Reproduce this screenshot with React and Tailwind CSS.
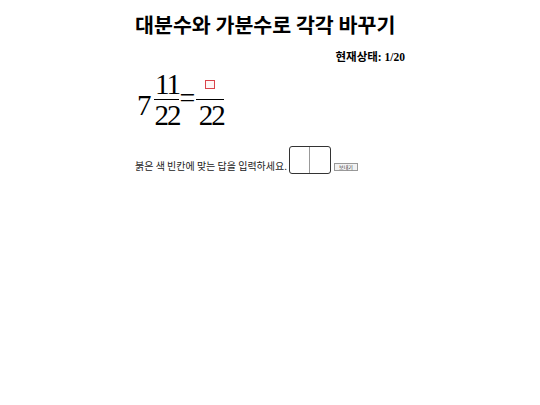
export default function App() {
  return (
    <div className="w-full min-h-[405px] bg-white">
      <div className="w-[270px] mx-auto" style={{ fontFamily: '"Noto Sans CJK KR", "Noto Sans", sans-serif' }}>
        <h1 className="pt-[10px] text-[20.6px] font-bold leading-[28px] text-black whitespace-nowrap">대분수와 가분수로 각각 바꾸기</h1>
        <div className="mt-[10px] text-right text-[11.5px] font-bold leading-[16px] text-black">
          현재상태<span className="font-['Liberation_Serif',serif]">: 1/20</span>
        </div>
        <div className="mt-[3px] flex items-center h-[62px] font-['Liberation_Serif',serif] text-black">
          <span className="text-[29px] leading-none mt-[12px] ml-[2px]">7</span>
          <div className="flex flex-col items-center ml-[2px] w-[25px]">
            <span className="text-[29px] leading-[26px] tracking-[-2px] pl-[2px]">11</span>
            <div className="w-[25px] h-px bg-black my-[2px]"></div>
            <span className="text-[29px] leading-[26px] tracking-[-2px] pl-[2px]">22</span>
          </div>
          <span className="text-[28px] leading-none mb-[2px] ml-[1px]">=</span>
          <div className="flex flex-col items-center ml-[1px] w-[28px]">
            <div className="h-[26px] flex items-center justify-center">
              <div className="w-[10px] h-[9px] border border-[#d9434a] bg-[#fff5f5] mt-[2px]"></div>
            </div>
            <div className="w-[28px] h-px bg-black my-[2px]"></div>
            <span className="text-[29px] leading-[26px] tracking-[-2px] pl-[2px]">22</span>
          </div>
        </div>
        <div className="mt-[16px] flex items-end text-[10px] text-[#222]">
          <span className="leading-[14px] mb-[1px]">붉은 색 빈칸에 맞는 답을 입력하세요.</span>
          <div className="ml-[2px] flex h-[28px] border border-[#333] rounded-[3px]">
            <div className="w-[20px] h-full border-r border-[#999]"></div>
            <div className="w-[20px] h-full"></div>
          </div>
          <button className="ml-[3px] mb-[3px] h-[8px] w-[24px] border border-[#999] bg-[#f2f2f2] text-[5px] leading-[6px] text-[#333]">보내기</button>
        </div>
      </div>
    </div>
  );
}
